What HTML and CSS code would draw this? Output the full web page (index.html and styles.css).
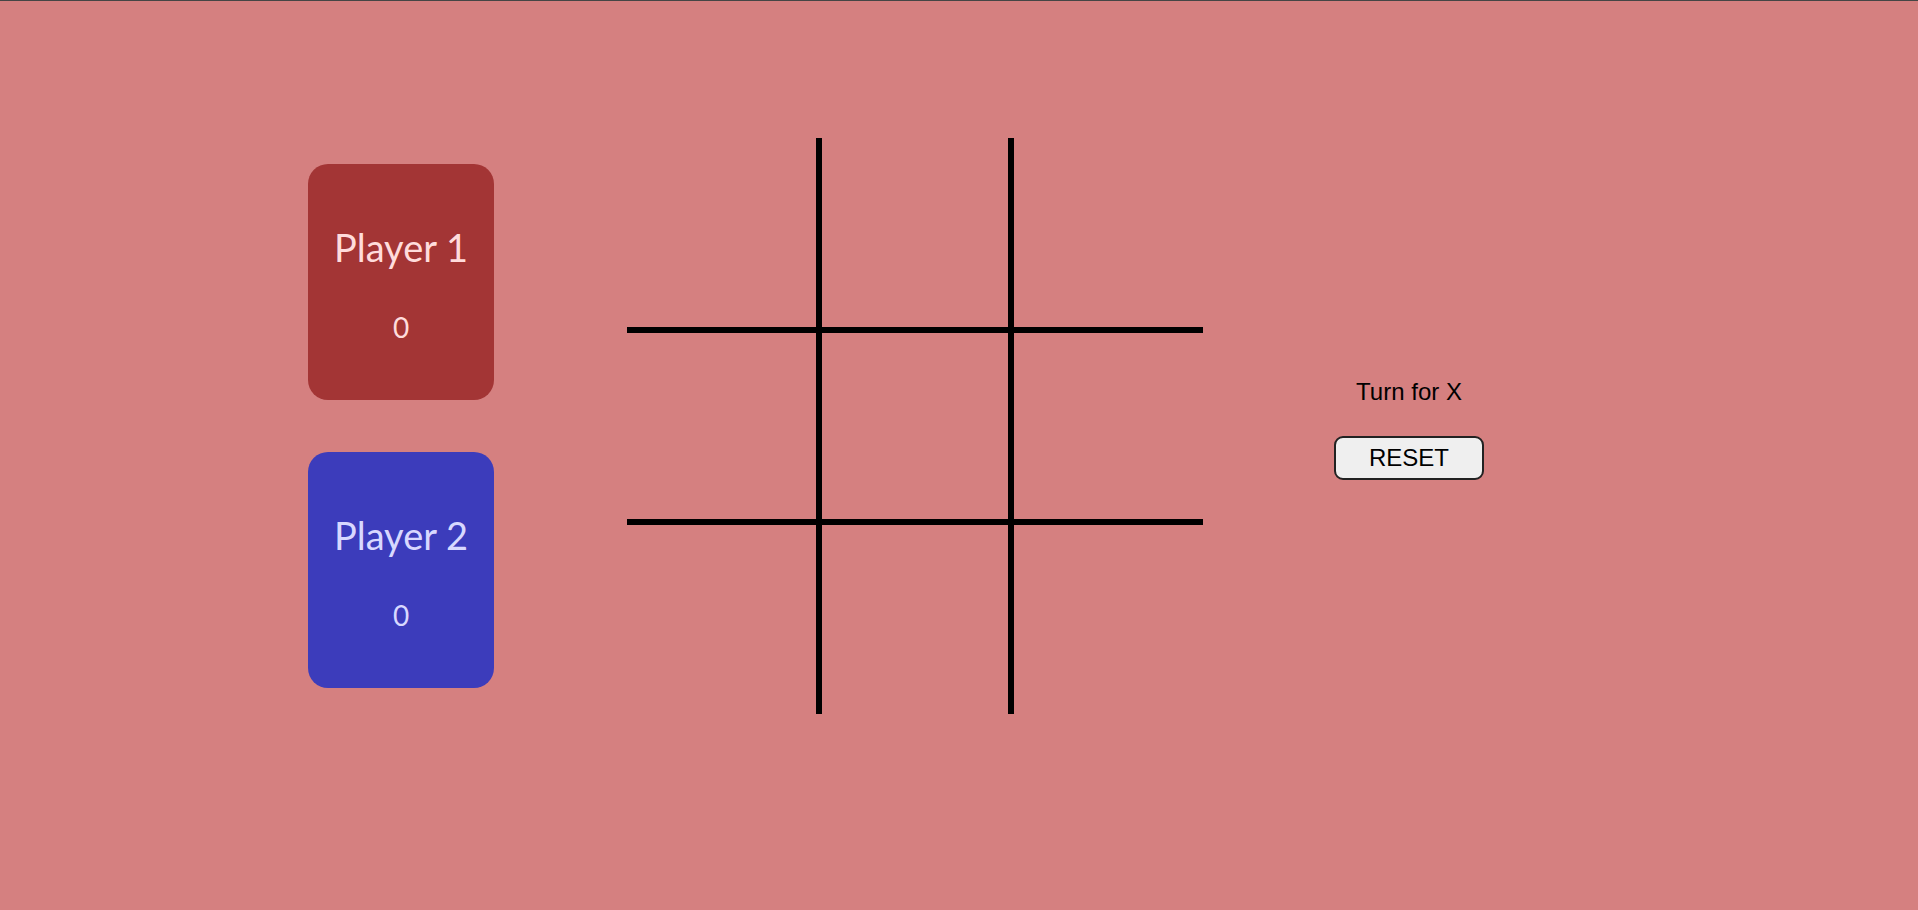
FILE: index.html
```html
<!DOCTYPE html>
<html lang="en">
<head>
<meta charset="utf-8">
<title>Tic Tac Toe</title>
<link rel="stylesheet" href="styles.css">
</head>
<body>
<main class="game">
  <section class="players">
    <div class="card card-p1">
      <h2 class="card-name">Player 1</h2>
      <p class="card-score">0</p>
    </div>
    <div class="card card-p2">
      <h2 class="card-name">Player 2</h2>
      <p class="card-score">0</p>
    </div>
  </section>
  <section class="board">
    <div class="cell"></div><div class="cell"></div><div class="cell"></div>
    <div class="cell"></div><div class="cell"></div><div class="cell"></div>
    <div class="cell"></div><div class="cell"></div><div class="cell"></div>
  </section>
  <section class="controls">
    <p class="turn">Turn for X</p>
    <button class="reset">RESET</button>
  </section>
</main>
</body>
</html>
```
FILE: styles.css
```css
html, body {
  margin: 0;
  padding: 0;
}
body {
  background: #d58080;
  border-top: 1px solid #454545;
  height: 909px;
  overflow: hidden;
  font-family: "Liberation Sans", Arial, sans-serif;
}
.game {
  display: flex;
  align-items: center;
  padding-top: 137px;
}
.players {
  flex: none;
  width: 240px;
  margin-left: 281px;
  display: flex;
  flex-direction: column;
  align-items: center;
  gap: 52px;
}
.card {
  border-radius: 20px;
  padding: 60px 26px 56px;
  text-align: center;
  font-family: Lato, "Noto Sans", sans-serif;
}
.card-p1 {
  background: #a33535;
  color: #ffdcdc;
}
.card-p2 {
  background: #3c3cbb;
  color: #d8d8ff;
}
.card-name {
  margin: 0;
  font-size: 38px;
  font-weight: 400;
  line-height: 46px;
}
.card-score {
  margin: 40px 0 0;
  font-size: 28px;
  line-height: 34px;
}
.board {
  flex: none;
  margin-left: 106px;
  display: grid;
  grid-template-columns: 189px 186px 189px;
  grid-template-rows: 189px 186px 189px;
  gap: 6px;
  background: #000;
}
.cell {
  background: #d58080;
}
.controls {
  flex: none;
  width: 300px;
  margin-left: 56px;
  margin-top: 6px;
  display: flex;
  flex-direction: column;
  align-items: center;
}
.turn {
  margin: 0;
  font-size: 24px;
  color: #000;
}
.reset {
  margin-top: 30px;
  width: 150px;
  height: 44px;
  font-family: "Liberation Sans", Arial, sans-serif;
  font-size: 24px;
  color: #000;
  background: #efefef;
  border: 2px solid #222;
  border-radius: 9px;
  padding: 0;
}
```
